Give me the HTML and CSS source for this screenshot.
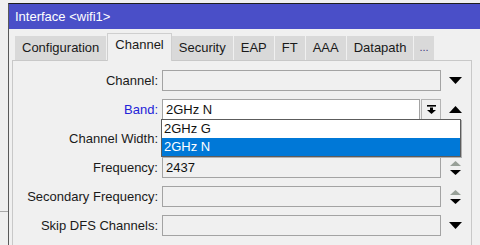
FILE: index.html
```html
<!DOCTYPE html>
<html lang="en">
<head>
    <meta charset="UTF-8">
    <title>Interface &lt;wifi1&gt;</title>
    <link rel="stylesheet" href="styles.css">
</head>
<body>
    <div class="win">
        <div class="titlebar">Interface &lt;wifi1&gt;</div>

        <!-- tab strip -->
        <div class="tabs">
            <span class="tab">Configuration</span>
            <span class="tab active">Channel</span>
            <span class="tab">Security</span>
            <span class="tab">EAP</span>
            <span class="tab">FT</span>
            <span class="tab">AAA</span>
            <span class="tab">Datapath</span>
            <span class="tab more">...</span>
        </div>

        <div class="panel">
            <div class="row">
                <label class="lbl">Channel:</label>
                <div class="field off"></div>
                <span class="ctl"><svg width="13" height="7" viewBox="0 0 13 7"><path d="M0 0h13L6.5 7z"/></svg></span>
            </div>

            <div class="row">
                <label class="lbl blue">Band:</label>
                <div class="combo">
                    <div class="field">2GHz N</div>
                    <span class="btn"><svg width="9" height="9" viewBox="0 0 9 9"><rect x="0" y="0" width="9" height="1.6"/><path d="M3 2.6h3v2.4h3L4.5 9 0 5h3z"/></svg></span>
                    <ul class="dropdown">
                        <li>2GHz G</li>
                        <li class="sel">2GHz N</li>
                    </ul>
                </div>
                <span class="ctl"><svg width="13" height="7" viewBox="0 0 13 7"><path d="M0 7h13L6.5 0z"/></svg></span>
            </div>

            <div class="row">
                <label class="lbl">Channel Width:</label>
                <div class="field off"></div>
                <span class="ctl"></span>
            </div>

            <div class="row">
                <label class="lbl">Frequency:</label>
                <div class="field off">2437</div>
                <span class="ctl"><svg width="11" height="14" viewBox="0 0 11 14"><path class="dim" d="M0 5L5.5 0 11 5z"/><path d="M0 9h11L5.5 14z"/></svg></span>
            </div>

            <div class="row">
                <label class="lbl">Secondary Frequency:</label>
                <div class="field off"></div>
                <span class="ctl"><svg width="11" height="14" viewBox="0 0 11 14"><path class="dim" d="M0 5L5.5 0 11 5z"/><path d="M0 9h11L5.5 14z"/></svg></span>
            </div>

            <div class="row">
                <label class="lbl">Skip DFS Channels:</label>
                <div class="field off"></div>
                <span class="ctl"><svg width="13" height="7" viewBox="0 0 13 7"><path d="M0 0h13L6.5 7z"/></svg></span>
            </div>
        </div>
    </div>
</body>
</html>
```

FILE: styles.css
```css
html, body {
    margin: 0;
    padding: 0;
}
body {
    width: 480px;
    height: 245px;
    overflow: hidden;
    font-family: "Liberation Sans", Arial, sans-serif;
    font-size: 13px;
    color: #1a1a1a;
    background-color: #f0f0f0;
    background-image: linear-gradient(to bottom, transparent 211px, #a8a8a8 211px, #a8a8a8 212px, transparent 212px);
}
.win {
    margin: 3px 0 0 8px;
    height: 242px;
    border-top: 1px solid #1e1e1e;
    border-left: 1px solid #5a5a5a;
    background: #f0f0f0;
    box-sizing: border-box;
}
.titlebar {
    height: 25px;
    line-height: 25px;
    padding-left: 6px;
    background: #4a4fc8;
    color: #fff;
}
.tabs {
    display: flex;
    align-items: flex-end;
    height: 31px;
    padding-left: 6px;
}
.tab {
    height: 24px;
    line-height: 23px;
    padding: 0 7px;
    margin-right: 1px;
    background: #d9d9d9;
    color: #1a1a1a;
}
.tab.active {
    height: 28px;
    line-height: 22px;
    background: #f0f0f0;
    border: 1px solid #cfcfcf;
    border-bottom: none;
    box-sizing: border-box;
    margin-right: 0;
    position: relative;
    top: 1px;
}
.tab.more {
    padding: 0 5px;
    font-size: 11px;
    color: #404080;
}
.panel {
    margin-left: 3px;
    width: 460px;
    height: 190px;
    border: 1px solid #c8c8c8;
    border-bottom: none;
    box-sizing: border-box;
    padding-top: 9px;
    display: flex;
    flex-direction: column;
    gap: 8px;
}
.row {
    display: flex;
    align-items: center;
    height: 21px;
}
.lbl {
    width: 145px;
    margin-right: 4px;
    text-align: right;
}
.lbl.blue {
    color: #2323d8;
}
.field {
    width: 279px;
    height: 21px;
    line-height: 19px;
    padding-left: 3px;
    border: 1px solid #a3a3a3;
    box-sizing: border-box;
    background: #fff;
    color: #111;
}
.field.off {
    background: #f0f0f0;
}
.combo {
    position: relative;
    display: flex;
    gap: 1px;
    width: 279px;
}
.combo .field {
    width: 258px;
}
.btn {
    width: 20px;
    height: 21px;
    border: 1px solid #b4b4b4;
    box-sizing: border-box;
    display: flex;
    align-items: center;
    justify-content: center;
}
.ctl {
    width: 28px;
    display: flex;
    justify-content: center;
    align-items: center;
}
.ctl .dim {
    fill: #98a098;
}
.dropdown {
    position: absolute;
    top: 20px;
    left: -1px;
    width: 300px;
    margin: 0;
    padding: 0;
    list-style: none;
    background: #fff;
    border: 1px solid #5c5c5c;
    box-shadow: 1px 1px 0 #b0b0b0;
    box-sizing: border-box;
    z-index: 5;
}
.dropdown li {
    height: 18px;
    line-height: 18px;
    padding-left: 2px;
    color: #111;
}
.dropdown li.sel {
    background: #0078d7;
    color: #fff;
}
```
